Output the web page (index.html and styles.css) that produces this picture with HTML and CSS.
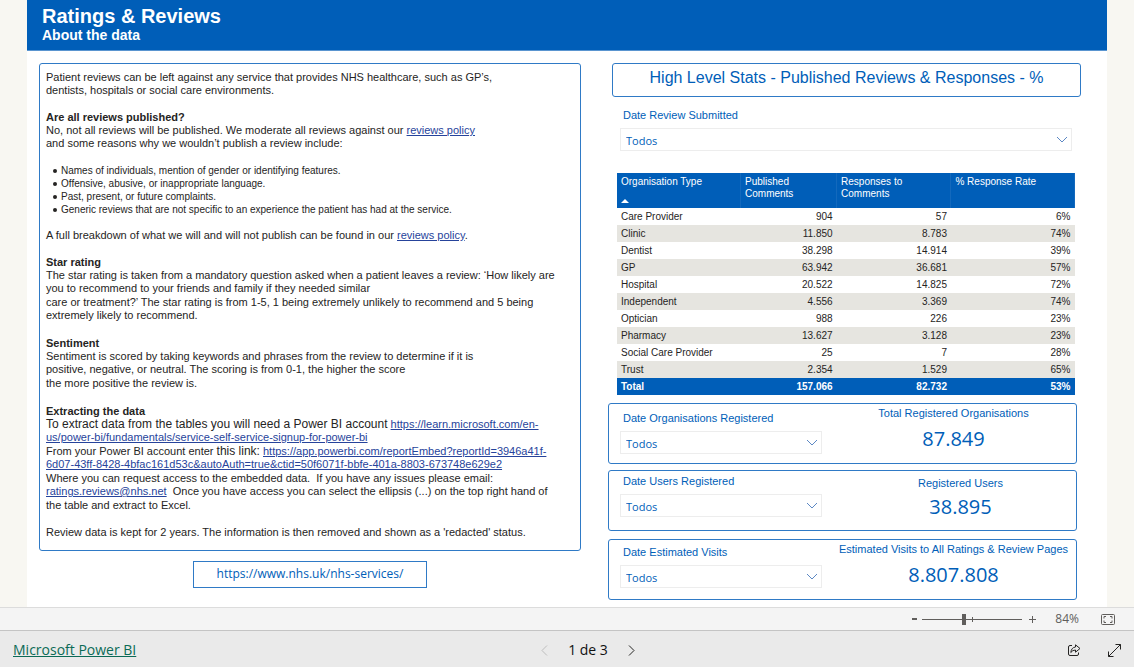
FILE: index.html
```html
<!DOCTYPE html>
<html lang="en">
<head>
<meta charset="utf-8">
<title>Ratings &amp; Reviews</title>
<link rel="stylesheet" href="styles.css">
</head>
<body>
<main class="report">
  <header class="report-header">
    <h1>Ratings &amp; Reviews</h1>
    <h2>About the data</h2>
  </header>
  <div class="columns">
    <div class="about">
      <article class="panel prose">
        <section>
          <p>Patient reviews can be left against any service that provides NHS healthcare, such as GP’s,<br>dentists, hospitals or social care environments.</p>
        </section>
        <section>
          <h3>Are all reviews published?</h3>
          <p>No, not all reviews will be published. We moderate all reviews against our <a href="#">reviews policy</a><br>and some reasons why we wouldn’t publish a review include:</p>
        </section>
        <ul>
          <li>Names of individuals, mention of gender or identifying features.</li>
          <li>Offensive, abusive, or inappropriate language.</li>
          <li>Past, present, or future complaints.</li>
          <li>Generic reviews that are not specific to an experience the patient has had at the service.</li>
        </ul>
        <section>
          <p>A full breakdown of what we will and will not publish can be found in our <a href="#">reviews policy</a>.</p>
        </section>
        <section>
          <h3>Star rating</h3>
          <p>The star rating is taken from a mandatory question asked when a patient leaves a review: ‘How likely are<br>you to recommend to your friends and family if they needed similar</p>
          <p>care or treatment?’ The star rating is from 1-5, 1 being extremely unlikely to recommend and 5 being<br>extremely likely to recommend.</p>
        </section>
        <section>
          <h3>Sentiment</h3>
          <p>Sentiment is scored by taking keywords and phrases from the review to determine if it is<br>positive, negative, or neutral. The scoring is from 0-1, the higher the score</p>
          <p>the more positive the review is.</p>
        </section>
        <section>
          <h3>Extracting the data</h3>
          <p><span class="large">To extract data from the tables you will need a Power BI account</span> <a href="#">https://learn.microsoft.com/en-<br>us/power-bi/fundamentals/service-self-service-signup-for-power-bi</a></p>
          <p>From your Power BI account enter <span class="large">this link:</span> <a href="#">https://app.powerbi.com/reportEmbed?reportId=3946a41f-<br>6d07-43ff-8428-4bfac161d53c&amp;autoAuth=true&amp;ctid=50f6071f-bbfe-401a-8803-673748e629e2</a></p>
          <p>Where you can request access to the embedded data.&nbsp; If you have any issues please email:<br><a href="#">ratings.reviews@nhs.net</a>&nbsp; Once you have access you can select the ellipsis (...) on the top right hand of</p>
          <p>the table and extract to Excel.</p>
        </section>
        <section>
          <p>Review data is kept for 2 years. The information is then removed and shown as a 'redacted' status.</p>
        </section>
      </article>
      <a class="site-link" href="#">https://www.nhs.uk/nhs-services/</a>
    </div>

    <div class="stats">
      <h2 class="panel stats-title">High Level Stats - Published Reviews &amp; Responses - %</h2>
      <div class="slicer slicer-wide">
        <label for="submitted">Date Review Submitted</label>
        <div class="select-box">
          <select id="submitted"><option>Todos</option></select>
          <svg class="chevron" viewBox="0 0 12 7"><path d="M1 1l5 5 5-5"/></svg>
        </div>
      </div>
      <table>
        <colgroup><col class="c-type"><col class="c-pub"><col class="c-resp"><col class="c-rate"></colgroup>
        <thead>
          <tr>
            <th scope="col">Organisation Type<svg class="sort" viewBox="0 0 8 4"><path d="M0 4l4-4 4 4z"/></svg></th>
            <th scope="col">Published Comments</th>
            <th scope="col">Responses to Comments</th>
            <th scope="col">% Response Rate</th>
          </tr>
        </thead>
        <tbody>
          <tr><td>Care Provider</td><td>904</td><td>57</td><td>6%</td></tr>
          <tr><td>Clinic</td><td>11.850</td><td>8.783</td><td>74%</td></tr>
          <tr><td>Dentist</td><td>38.298</td><td>14.914</td><td>39%</td></tr>
          <tr><td>GP</td><td>63.942</td><td>36.681</td><td>57%</td></tr>
          <tr><td>Hospital</td><td>20.522</td><td>14.825</td><td>72%</td></tr>
          <tr><td>Independent</td><td>4.556</td><td>3.369</td><td>74%</td></tr>
          <tr><td>Optician</td><td>988</td><td>226</td><td>23%</td></tr>
          <tr><td>Pharmacy</td><td>13.627</td><td>3.128</td><td>23%</td></tr>
          <tr><td>Social Care Provider</td><td>25</td><td>7</td><td>28%</td></tr>
          <tr><td>Trust</td><td>2.354</td><td>1.529</td><td>65%</td></tr>
        </tbody>
        <tfoot>
          <tr><td>Total</td><td>157.066</td><td>82.732</td><td>53%</td></tr>
        </tfoot>
      </table>
      <section class="panel card card-orgs">
        <div class="slicer">
          <label for="orgs">Date Organisations Registered</label>
          <div class="select-box">
            <select id="orgs"><option>Todos</option></select>
            <svg class="chevron" viewBox="0 0 12 7"><path d="M1 1l5 5 5-5"/></svg>
          </div>
        </div>
        <div class="metric"><h3>Total Registered Organisations</h3><p>87.849</p></div>
      </section>
      <section class="panel card card-users">
        <div class="slicer">
          <label for="users">Date Users Registered</label>
          <div class="select-box">
            <select id="users"><option>Todos</option></select>
            <svg class="chevron" viewBox="0 0 12 7"><path d="M1 1l5 5 5-5"/></svg>
          </div>
        </div>
        <div class="metric"><h3>Registered Users</h3><p>38.895</p></div>
      </section>
      <section class="panel card card-visits">
        <div class="slicer">
          <label for="visits">Date Estimated Visits</label>
          <div class="select-box">
            <select id="visits"><option>Todos</option></select>
            <svg class="chevron" viewBox="0 0 12 7"><path d="M1 1l5 5 5-5"/></svg>
          </div>
        </div>
        <div class="metric"><h3>Estimated Visits to All Ratings &amp; Review Pages</h3><p>8.807.808</p></div>
      </section>
    </div>
  </div>
</main>

<div class="zoom-bar">
  <button type="button" aria-label="Zoom out"><svg width="5" height="2"><path class="fill" d="M0 0h5v2H0z"/></svg></button>
  <input type="range" min="10" max="190" value="84" aria-label="Zoom">
  <button type="button" aria-label="Zoom in"><svg width="7" height="7"><path class="fill" d="M3 0h1v3h3v1H4v3H3V4H0V3h3z"/></svg></button>
  <span class="zoom-value">84%</span>
  <button type="button" aria-label="Fit to page"><svg width="14" height="11" viewBox="0 0 14 11"><rect class="line" x=".5" y=".5" width="13" height="10" rx="1"/><path class="line" d="M3 4.500V2.500H5M9 2.500h2v2M11 6.500v2H9M5 8.500H3v-2"/></svg></button>
</div>

<footer class="footer">
  <a href="#">Microsoft Power BI</a>
  <nav class="pager" aria-label="Pages">
    <button type="button" aria-label="Previous page" disabled><svg width="7" height="11" viewBox="0 0 7 11"><path d="M6 .5l-5 5 5 5"/></svg></button>
    <span>1 de 3</span>
    <button type="button" aria-label="Next page"><svg width="7" height="11" viewBox="0 0 7 11"><path d="M1 .5l5 5-5 5"/></svg></button>
  </nav>
  <div class="actions">
    <button type="button" aria-label="Share"><svg width="14" height="13" viewBox="0 0 14 13"><path d="M5 1.500H3Q1.500 1.500 1.500 3v7Q1.500 11.500 3 11.500h7q1.500 0 1.500-1.500V8.500"/><path d="M8.500.8l4.500 3.700-4.500 3.700V6Q5.500 6 3.800 8.500 4.300 3.500 8.500 3z"/></svg></button>
    <button type="button" aria-label="Full screen"><svg width="13" height="13" viewBox="0 0 13 13"><path d="M.5 12.500l12-12M7.500.5h5v5M.5 7.500v5h5"/></svg></button>
  </div>
</footer>
</body>
</html>
```
FILE: styles.css
```css
:root {
  --blue: #005eb8;
  --line: #2f7ac6;
  --ui: "Open Sans", "Noto Sans", sans-serif;
}

* {
  box-sizing: border-box;
}

body {
  display: flex;
  flex-direction: column;
  min-height: 100vh;
  margin: 0;
  background: #f8f7f2;
  color: #252423;
  font: 11px/13px "Liberation Sans", Arial, sans-serif;
}

h1, h2, h3, p, ul {
  margin: 0;
}

button {
  display: flex;
  padding: 0;
  border: 0;
  background: none;
}

.report {
  flex: 1;
  margin: 0 27px;
  padding-bottom: 7px;
  background: #fff;
}

.report-header {
  padding: 4px 15px 7px;
  border-bottom: 1px solid #5a95d0;
  background: var(--blue);
  color: #fff;
}

.report-header h1 {
  font-size: 20px;
  line-height: 24px;
}

.report-header h2 {
  font-size: 14px;
  line-height: 15px;
}

.columns {
  display: grid;
  grid-template-columns: 542fr 473fr;
  gap: 27px;
  padding: 12px 26px 0 12px;
}

.panel {
  border: 1px solid var(--line);
  border-radius: 3px;
}

.about {
  display: flex;
  flex-direction: column;
  align-items: center;
  gap: 10px;
}

.prose {
  display: flex;
  flex-direction: column;
  gap: 13px;
  width: 100%;
  padding: 7px 6px 11px;
}

.prose p {
  margin-bottom: 1px;
}

.prose p:only-child {
  margin-bottom: 0;
}

.prose h3 {
  font-size: 11px;
  line-height: 14px;
}

.prose a {
  color: #26439b;
}

.prose ul {
  padding-left: 7px;
  font-size: 10px;
  list-style: none;
}

.prose li {
  display: flex;
  align-items: center;
  gap: 4px;
}

.prose li::before {
  width: 4px;
  height: 4px;
  border-radius: 50%;
  background: #252423;
  content: "";
}

.large {
  font-size: 12px;
}

.site-link {
  padding: 5px 23px 7px;
  border: 1px solid var(--line);
  color: var(--blue);
  font: 12px/13px var(--ui);
  text-decoration: none;
}

.stats {
  color: var(--blue);
}

.stats-title {
  margin-left: 4px;
  padding: 4px 0 8px;
  font-size: 16px;
  font-weight: 400;
  line-height: 20px;
  text-align: center;
}

.slicer label {
  display: block;
  padding-left: 3px;
}

.slicer-wide {
  margin: 12px 9px 22px 12px;
}

.select-box {
  position: relative;
  margin-top: 6px;
}

.select-box select {
  display: block;
  width: 100%;
  height: 23px;
  padding: 3px 5px 0;
  border: 1px solid #ededed;
  border-radius: 0;
  appearance: none;
  background: #fff;
  color: var(--blue);
  font: 11px/16px var(--ui);
}

.chevron {
  position: absolute;
  top: 8px;
  right: 4px;
  width: 12px;
  height: 7px;
  fill: none;
  stroke: #5c88c4;
}

table {
  width: calc(100% - 15px);
  margin-left: 9px;
  border-collapse: collapse;
  table-layout: fixed;
  color: #252423;
  font-size: 10px;
  line-height: 12px;
}

.c-type { width: 27%; }
.c-pub { width: 21%; }
.c-resp { width: 25%; }
.c-rate { width: 27%; }

th {
  height: 35px;
  padding: 3px 4px 0;
  border-right: 1px solid #1369bd;
  background: var(--blue);
  color: #fff;
  font-weight: 400;
  text-align: left;
  vertical-align: top;
}

.sort {
  display: block;
  width: 8px;
  height: 4px;
  margin-top: 11px;
  fill: #fff;
}

td {
  height: 17px;
  padding: 0 4px;
  text-align: right;
}

td:first-child {
  text-align: left;
}

tbody tr:nth-child(even) {
  background: #e6e5e0;
}

tfoot {
  background: var(--blue);
  color: #fff;
  font-weight: 700;
}

.card {
  display: grid;
  grid-template-columns: 202px 1fr;
  gap: 10px;
  height: 61px;
  margin: 8px 4px 0 0;
  padding: 0 1px 0 11px;
}

.card-orgs .slicer { padding-top: 8px; }
.card-users { margin-top: 6px; }
.card-users .slicer { padding-top: 4px; }
.card-users .metric { padding: 6px 0 0 14px; }
.card-visits .slicer { padding-top: 6px; }

.metric {
  padding-top: 3px;
  text-align: center;
}

.metric h3 {
  font-size: 11px;
  font-weight: 400;
}

.metric p {
  font: 20px/24px var(--ui);
  margin-top: 7px;
}

.card-users .metric p { margin-top: 5px; }

.zoom-bar {
  display: flex;
  align-items: center;
  justify-content: flex-end;
  height: 23px;
  padding-right: 19px;
  border-top: 1px solid #dcdcdc;
  background: #f4f4f4;
  color: #605e5c;
  font: 12px/16px var(--ui);
}

.zoom-bar .fill { fill: #605e5c; }
.zoom-bar .line { fill: none; stroke: #605e5c; }

.zoom-bar input {
  width: 100px;
  height: 12px;
  margin: 0 7px 0 5px;
  appearance: none;
  background:
    linear-gradient(#605e5c, #605e5c) 50% 50% / 1px 5px no-repeat,
    linear-gradient(#605e5c, #605e5c) 50% 50% / 100% 1px no-repeat;
}

.zoom-bar input::-webkit-slider-thumb {
  width: 4px;
  height: 11px;
  appearance: none;
  background: #605e5c;
}

.zoom-value {
  margin: 0 22px 0 19px;
}

.footer {
  display: grid;
  grid-template-columns: 1fr auto 1fr;
  align-items: center;
  height: 37px;
  padding: 2px 13px 0;
  border-top: 1px solid #c4c4c4;
  background: #eaeaea;
  font: 14px/20px var(--ui);
}

.footer a {
  color: #0b6a56;
}

.footer svg {
  fill: none;
  stroke: #252423;
}

.pager {
  display: flex;
  align-items: center;
  gap: 20px;
  margin-left: 42px;
  color: #111;
}

.pager button:disabled svg {
  stroke: #bdbdbd;
}

.actions {
  display: flex;
  justify-content: flex-end;
  gap: 27px;
}
```
